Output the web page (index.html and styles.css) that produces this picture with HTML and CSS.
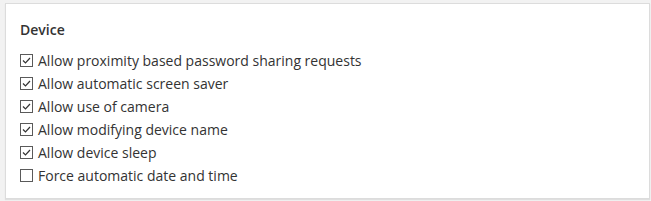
FILE: index.html
```html
<!DOCTYPE html>
<html lang="en">
<head>
  <meta charset="UTF-8" />
  <title>Device</title>
  <link rel="stylesheet" href="styles.css">
</head>
<body>
  <div class="panel">
    <h3>Device</h3>
    <ul class="options">
      <li><svg class="box" viewBox="0 0 13 13"><rect x="0.5" y="0.5" width="12" height="12" fill="#fff" stroke="#5a5a5a"/><path d="M3 6.5 L5.5 9 L10 4" fill="none" stroke="#333" stroke-width="1.2"/></svg>Allow proximity based password sharing requests</li>
      <li><svg class="box" viewBox="0 0 13 13"><rect x="0.5" y="0.5" width="12" height="12" fill="#fff" stroke="#5a5a5a"/><path d="M3 6.5 L5.5 9 L10 4" fill="none" stroke="#333" stroke-width="1.2"/></svg>Allow automatic screen saver</li>
      <li><svg class="box" viewBox="0 0 13 13"><rect x="0.5" y="0.5" width="12" height="12" fill="#fff" stroke="#5a5a5a"/><path d="M3 6.5 L5.5 9 L10 4" fill="none" stroke="#333" stroke-width="1.2"/></svg>Allow use of camera</li>
      <li><svg class="box" viewBox="0 0 13 13"><rect x="0.5" y="0.5" width="12" height="12" fill="#fff" stroke="#5a5a5a"/><path d="M3 6.5 L5.5 9 L10 4" fill="none" stroke="#333" stroke-width="1.2"/></svg>Allow modifying device name</li>
      <li><svg class="box" viewBox="0 0 13 13"><rect x="0.5" y="0.5" width="12" height="12" fill="#fff" stroke="#5a5a5a"/><path d="M3 6.5 L5.5 9 L10 4" fill="none" stroke="#333" stroke-width="1.2"/></svg>Allow device sleep</li>
      <li><svg class="box" viewBox="0 0 13 13"><rect x="0.5" y="0.5" width="12" height="12" fill="#fff" stroke="#5a5a5a"/></svg>Force automatic date and time</li>
    </ul>
  </div>
</body>
</html>
```

FILE: styles.css
```css
body {
  font-family: "Open Sans", sans-serif;
  margin: 0;
  padding: 3px 1px 2px 5px;
  background-color: #f2f2f2;
  color: #333;
}
.panel {
  background-color: #fff;
  border: 1px solid #dcdcdc;
  box-shadow: 0 1px 1px rgba(0, 0, 0, 0.08);
  padding: 16px 14px 11px 14px;
  height: 167px;
}
.panel h3 {
  margin: 0 0 9px 0;
  font-size: 14px;
  font-weight: 600;
  line-height: 20px;
}
.options {
  list-style-type: none;
  margin: 0;
  padding: 0;
}
.options li {
  display: flex;
  align-items: center;
  height: 23px;
  font-size: 14px;
}
.options .box {
  width: 13px;
  height: 13px;
  margin-right: 5px;
  flex-shrink: 0;
}
```
